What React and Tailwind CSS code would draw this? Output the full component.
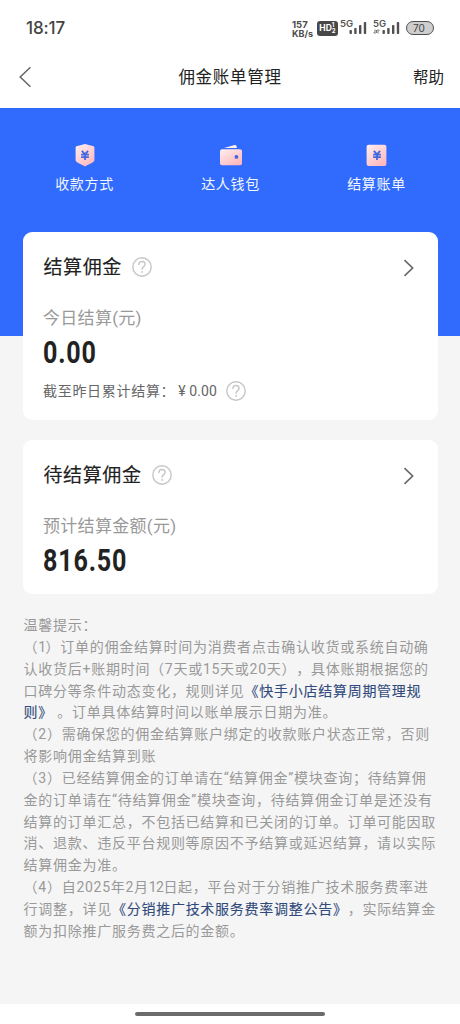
import React from 'react';

function Help() {
  return (
    <svg className="h-5 w-5 shrink-0" viewBox="0 0 20 20" fill="none" stroke="#c6c6c6" strokeWidth="1.4">
      <circle cx="10" cy="10" r="9.2" />
      <path d="M6.9 7.6c0-1.8 1.3-3.1 3.1-3.1s3.1 1.2 3.1 2.8c0 2.3-3 2.4-3 5" strokeLinecap="round" />
      <circle cx="10.1" cy="14.9" r="0.7" fill="#c6c6c6" strokeWidth="0.6" />
    </svg>
  );
}

function Chevron() {
  return (
    <svg className="h-[18px] w-3" viewBox="0 0 12 18" fill="none" stroke="#6a6a6a" strokeWidth="1.7">
      <path d="M1.5 1.2 9.6 9l-8.1 7.8" />
    </svg>
  );
}

function Gradient({ id }) {
  return (
    <defs>
      <linearGradient id={id} x1="0" y1="0" x2="0.7" y2="1">
        <stop offset="0" stopColor="#ffeff0" />
        <stop offset="1" stopColor="#ffb9be" />
      </linearGradient>
    </defs>
  );
}

const yen = 'M8.9 7.8l3.1 3.6 3.1-3.6M8.1 11.6h7.8M8.1 14.2h7.8M12 11.4v5.6';

function ShieldIcon() {
  return (
    <svg className="h-6 w-6" viewBox="0 0 24 24">
      <Gradient id="shield" />
      <path d="M12 1 20.6 3.3Q21.4 3.5 21.4 4.4V17.3C21.4 19.4 16 21.4 12 23.4 8 21.4 2.6 19.4 2.6 17.3V4.4Q2.6 3.5 3.4 3.3Z" fill="url(#shield)" />
      <path d={yen} fill="none" stroke="#4169df" strokeWidth="1.8" />
    </svg>
  );
}

function WalletIcon() {
  return (
    <svg className="h-6 w-6" viewBox="0 0 24 24">
      <Gradient id="wallet" />
      <path d="M5 4.9 15.6 2Q17 1.7 17.4 3L18 4.9Z" fill="#fff0f0" />
      <rect x="1" y="6.3" width="22" height="16" rx="2" fill="url(#wallet)" />
      <circle cx="17.4" cy="13.9" r="1.9" fill="#4169df" />
    </svg>
  );
}

function BillIcon() {
  return (
    <svg className="h-6 w-6" viewBox="0 0 24 24">
      <Gradient id="bill" />
      <rect x="1.6" y="1.8" width="19.8" height="21.2" rx="2" fill="url(#bill)" />
      <path d={yen} fill="none" stroke="#4169df" strokeWidth="1.8" />
    </svg>
  );
}

function Signal({ data }) {
  return (
    <div className="relative h-[18px] w-[27px]">
      <span className="absolute left-0 top-0 text-[9.5px] font-semibold leading-[9px] text-[#555]">5G</span>
      {data && (
        <svg className="absolute bottom-[3px] left-0 h-[5px] w-[7px]" viewBox="0 0 7 5" fill="none" stroke="#777" strokeWidth="1">
          <path d="M0.5 3 2 4.5V0.5M6.5 2 5 .5v4M3.5 1v3" />
        </svg>
      )}
      <svg className="absolute bottom-[3px] right-0 h-3 w-[18px]" viewBox="0 0 18 12" fill="#505050">
        <rect x="0.5" y="8" width="2.4" height="4" rx="0.8" />
        <rect x="5.2" y="6" width="2.4" height="6" rx="0.8" />
        <rect x="10" y="3" width="2.4" height="9" rx="0.8" />
        <rect x="14.8" y="0" width="2.4" height="12" rx="0.8" />
      </svg>
    </div>
  );
}

function StatusBar() {
  return (
    <div className="flex h-14 items-center px-[26px] font-[Inter]">
      <span className="mt-[2px] text-[17px] font-medium tracking-[-0.1px] text-[#444]">18:17</span>
      <div className="ml-auto flex items-center">
        <div className="mt-px w-[25px] text-[9px] font-bold leading-[9px] text-[#4c4c4c]">
          <div className="text-[9.5px]">157</div>
          <div className="text-[9px]">KB/s</div>
        </div>
        <div className="flex h-[15px] w-[21px] items-center justify-center rounded-[3px] bg-[#484848] text-white">
          <span className="text-[8.5px] font-bold leading-none">HD</span>
          <span className="text-[6px] font-bold leading-[6px]">1<br />2</span>
        </div>
        <div className="ml-[2px]"><Signal /></div>
        <div className="ml-[6px]"><Signal data /></div>
        <div className="ml-[6px] flex h-[14px] w-[28px] items-center rounded-full border-[1.5px] border-[#505050] bg-[#cecece] pl-[6px] text-[10px] leading-none text-[#444]">70</div>
      </div>
    </div>
  );
}

function Shortcut({ icon, label }) {
  return (
    <div className="flex w-[146px] flex-col items-center">
      {icon}
      <span className="mt-[7px] text-[14px] leading-5 tracking-[0.65px] text-[#f3f7ff]">{label}</span>
    </div>
  );
}

function CardTitle({ children }) {
  return (
    <div className="flex h-6 items-center">
      <h2 className="mt-[2px] pl-[0.5px] text-[19px] tracking-[0.6px] text-[#222] [-webkit-text-stroke:0.15px_#222]">{children}</h2>
      <span className="ml-[10px]"><Help /></span>
      <span className="ml-auto mr-[3px] mt-[2px]"><Chevron /></span>
    </div>
  );
}

function Amount({ children }) {
  return (
    <div className="mt-[7px] h-8 origin-left scale-x-[0.81] font-[Roboto] text-[31px] font-bold leading-8 tracking-[1px] text-[#222]">
      {children}
    </div>
  );
}

const Link = ({ children }) => (
  <a className="text-[#314a7c] [-webkit-text-stroke:0.12px_#314a7c]">{children}</a>
);

const Tight = ({ children }) => <span className="tracking-[-0.6px]">{children}</span>;

const notes = [
  '温馨提示：',
  <>（<Tight>1</Tight>）订单的佣金结算时间为消费者点击确认收货或系统自动确</>,
  '认收货后+账期时间（7天或15天或20天），具体账期根据您的',
  <>口碑分等条件动态变化，规则详见<Link>《快手小店结算周期管理规</Link></>,
  <><Link>则》</Link> 。订单具体结算时间以账单展示日期为准。</>,
  '（2）需确保您的佣金结算账户绑定的收款账户状态正常，否则',
  '将影响佣金结算到账',
  '（3）已经结算佣金的订单请在“结算佣金”模块查询；待结算佣',
  '金的订单请在“待结算佣金”模块查询，待结算佣金订单是还没有',
  '结算的订单汇总，不包括已结算和已关闭的订单。订单可能因取',
  '消、退款、违反平台规则等原因不予结算或延迟结算，请以实际',
  '结算佣金为准。',
  <>（4）自2025年2月<Tight>12</Tight>日起，平台对于分销推广技术服务费率进</>,
  <>行调整，详见<Link>《分销推广技术服务费率调整公告》</Link>，实际结算金</>,
  '额为扣除推广服务费之后的金额。',
];

export default function App() {
  return (
    <div lang="zh-CN" className="flex h-[1024px] w-[460px] flex-col overflow-hidden bg-[#f5f5f5] font-[Roboto,'Noto_Sans_CJK_SC',sans-serif] [text-spacing-trim:space-all]">
      <div className="h-[108px] shrink-0 bg-white">
        <StatusBar />
        <div className="grid h-[42px] grid-cols-[1fr_auto_1fr] items-center pl-[19px] pr-[16px]">
          <svg className="h-[22px] w-3" viewBox="0 0 12 22" fill="none" stroke="#666" strokeWidth="1.5">
            <path d="M11.4 1.2 1.2 11l10.2 9.8" />
          </svg>
          <h1 className="mr-[3px] mt-[3px] text-[16.5px] tracking-[0.7px] text-[#222]">佣金账单管理</h1>
          <span className="mt-[3px] text-right text-[15.5px] text-[#222]">帮助</span>
        </div>
      </div>
      <div className="h-[228px] shrink-0 bg-[#316bfd]">
        <div className="flex justify-center pl-px pt-[35px]">
          <Shortcut icon={<ShieldIcon />} label="收款方式" />
          <Shortcut icon={<WalletIcon />} label="达人钱包" />
          <Shortcut icon={<BillIcon />} label="结算账单" />
        </div>
      </div>
      <main className="-mt-[104px] flex flex-1 flex-col pl-[23px] pr-[22px]">
        <section className="h-[188px] shrink-0 rounded-[9px] bg-white px-5 pt-[23px]">
          <CardTitle>结算佣金</CardTitle>
          <div className="mt-[27px] text-[17px] leading-6 tracking-[0.3px] text-[#999]">今日结算(元)</div>
          <Amount>0.00</Amount>
          <div className="mt-[10px] flex h-6 items-center text-[14px] tracking-[0.7px] text-[#666]">
            <span>截至昨日累计结算：</span>
            <span className="ml-[3px] tracking-[0.1px]">¥ 0.00</span>
            <span className="ml-[9px]"><Help /></span>
          </div>
        </section>
        <section className="mt-5 h-[154px] shrink-0 rounded-[9px] bg-white px-5 pt-[23px]">
          <CardTitle>待结算佣金</CardTitle>
          <div className="mt-[27px] text-[17px] leading-6 tracking-[0.3px] text-[#999]">预计结算金额(元)</div>
          <Amount>816.50</Amount>
        </section>
        <div className="mt-[21px] pl-[0.6px] text-[14px] leading-[21.85px] tracking-[0.73px] text-[#999]">
          {notes.map((line, i) => (
            <p key={i} className="whitespace-nowrap">{line}</p>
          ))}
        </div>
      </main>
      <div className="flex h-5 shrink-0 items-center justify-center bg-white">
        <div className="h-1 w-[190px] rounded-full bg-[#6b6b6b]" />
      </div>
    </div>
  );
}
